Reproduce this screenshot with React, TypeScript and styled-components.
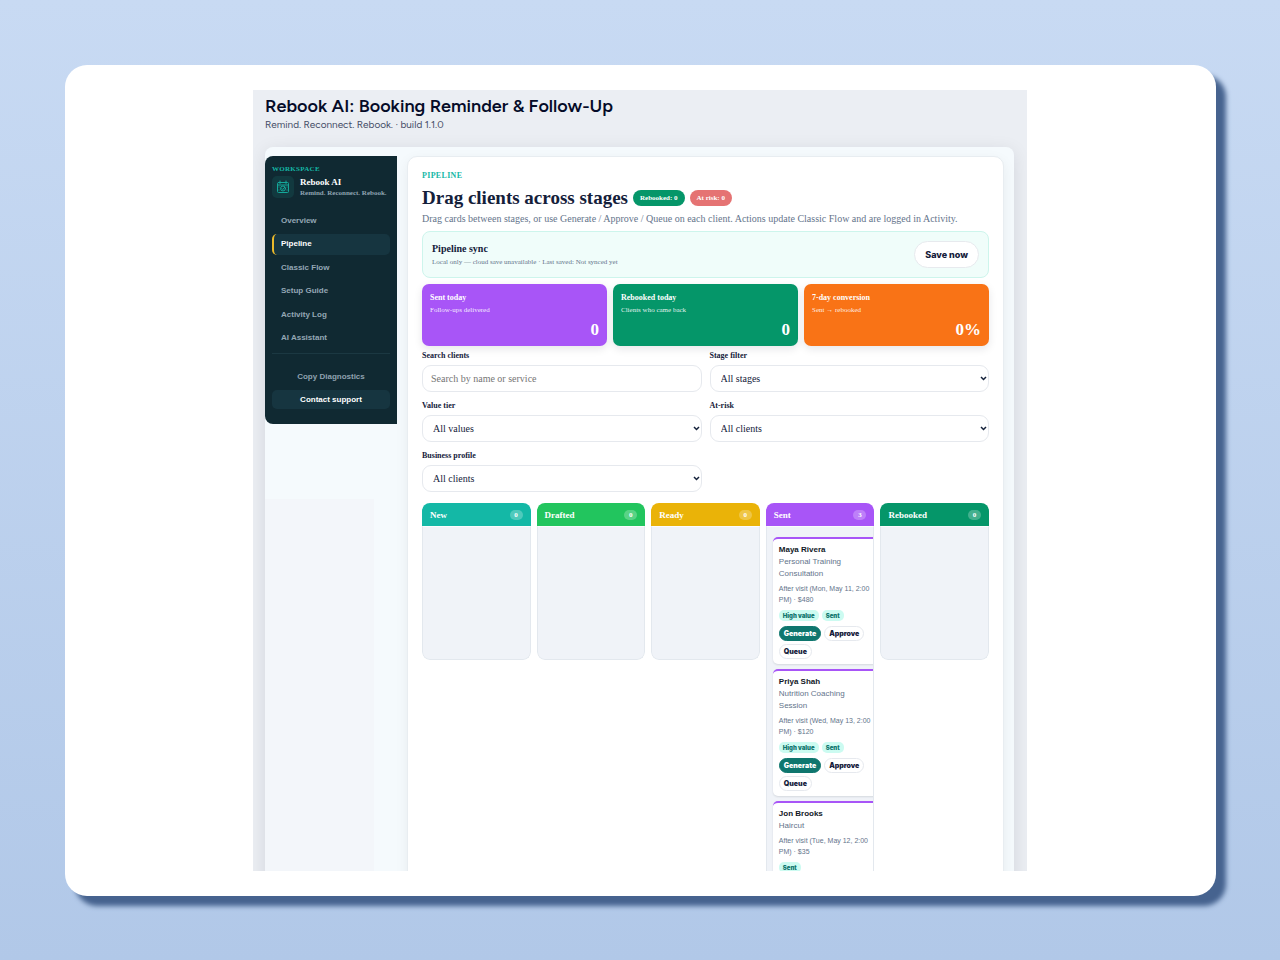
import React from 'react';
import styled, { createGlobalStyle } from 'styled-components';

const serif = '"Liberation Serif", "Times New Roman", serif';
const sans = '"Liberation Sans", Arial, sans-serif';
const heavy = 'Inter, "Arial Black", sans-serif';
const display = 'Figtree, Inter, "Open Sans", sans-serif';

const Global = createGlobalStyle`
  *, *::before, *::after { box-sizing: border-box; }
  body { margin: 0; font-family: ${serif}; color: #14213a; }
  h1, h2, h3, p, ul { margin: 0; padding: 0; }
  ul { list-style: none; }
  button { margin: 0; cursor: pointer; }
`;

const Backdrop = styled.div`
  display: flex;
  height: 100vh;
  padding: 65px 64px 64px 65px;
  background: linear-gradient(180deg, #c8daf3 0%, #b1c8e8 100%);
`;

const Frame = styled.div`
  flex: 1;
  min-width: 0;
  display: flex;
  justify-content: center;
  padding: 25px 25px 25px 24px;
  border-radius: 22px;
  background: #fff;
  box-shadow: 10px 10px 5px #46638f;
`;

const Screen = styled.div`
  width: 100%;
  max-width: 774px;
  display: flex;
  flex-direction: column;
  overflow: hidden;
  padding: 0 13px 0 12px;
  background: #ebeef3;
`;

const PageHeader = styled.header`
  flex: none;
  height: 57px;
  padding-top: 6px;
  font-family: ${display};
`;

const PageTitle = styled.h1`
  font-size: 18px;
  line-height: 21px;
  font-weight: 600;
  color: #050b28;
`;

const PageSubtitle = styled.p`
  font-size: 10px;
  line-height: 16px;
  color: #454d66;
`;

const Panel = styled.div`
  flex: 1 0 auto;
  display: flex;
  gap: 10px;
  padding: 9px 10px 0 0;
  border-radius: 8px 8px 0 0;
  background: #f5fafd;
  box-shadow: 0 4px 18px rgba(15, 23, 42, 0.1);
`;

const Rail = styled.div`
  flex: none;
  width: 132px;
  display: flex;
  flex-direction: column;
`;

const RailShade = styled.div`
  flex: 1;
  width: 109px;
  margin-top: 75px;
  background: #f3f6fa;
`;

const Sidebar = styled.aside`
  height: 268px;
  padding: 8px 7px;
  border-radius: 8px 0 0 8px;
  background: #102932;
`;

const Eyebrow = styled.p<{ $large?: boolean }>`
  font-size: ${(p) => (p.$large ? 8 : 7)}px;
  line-height: 10px;
  font-weight: 700;
  letter-spacing: 0.04em;
  text-transform: uppercase;
  color: #14b8a6;
`;

const Brand = styled.div`
  display: flex;
  align-items: center;
  gap: 6px;
  margin-top: 2px;
  height: 22px;
`;

const BrandMark = styled.div`
  flex: none;
  display: grid;
  place-items: center;
  width: 22px;
  height: 22px;
  border-radius: 5px;
  background: #12393f;
`;

const BrandName = styled.p`
  font-size: 9px;
  line-height: 12px;
  font-weight: 700;
  color: #fff;
`;

const BrandTag = styled.p`
  font-size: 7px;
  line-height: 11px;
  font-weight: 700;
  white-space: nowrap;
  color: #8fa3b1;
`;

const Nav = styled.nav`
  display: grid;
  grid-auto-rows: 1fr;
  gap: 2px;
  height: 139px;
  margin-top: 12px;
`;

const NavItem = styled.button<{ $active?: boolean }>`
  padding: 0 0 0 ${(p) => (p.$active ? 7 : 9)}px;
  border: 0;
  border-left: ${(p) => (p.$active ? '2px solid #eab92b' : '0')};
  border-radius: 5px;
  background: ${(p) => (p.$active ? '#163540' : 'transparent')};
  font: 700 8px/12px ${sans};
  text-align: left;
  color: ${(p) => (p.$active ? '#fff' : '#94a7b5')};
`;

const SidebarFoot = styled.div`
  display: grid;
  gap: 4px;
  margin-top: 4px;
  padding-top: 13px;
  border-top: 1px solid #1b3842;
`;

const FootButton = styled.button<{ $filled?: boolean }>`
  height: 19px;
  padding: 0;
  border: 0;
  border-radius: 5px;
  background: ${(p) => (p.$filled ? '#163540' : 'transparent')};
  font: 700 8px/12px ${sans};
  color: ${(p) => (p.$filled ? '#fff' : '#8fa2b0')};
`;

const Main = styled.main`
  flex: 1;
  min-width: 0;
  padding: 14px 14px;
  border: 1px solid #e8edf1;
  border-radius: 10px 10px 0 0;
  background: #fff;
  box-shadow: 0 4px 14px rgba(15, 23, 42, 0.06);
`;

const TitleRow = styled.div`
  display: flex;
  align-items: center;
  gap: 5px;
  height: 24px;
  margin-top: 5px;
`;

const Heading = styled.h2`
  font-size: 19px;
  line-height: 24px;
  font-weight: 700;
  white-space: nowrap;
  color: #14203a;
`;

const Pill = styled.span<{ $color: string }>`
  padding: 0 7px;
  border-radius: 8px;
  background: ${(p) => p.$color};
  font-size: 7px;
  line-height: 16px;
  font-weight: 700;
  white-space: nowrap;
  color: #fff;
`;

const Lead = styled.p`
  margin-top: 2px;
  font-size: 10px;
  line-height: 14px;
  color: #64748b;
`;

const SyncBox = styled.section`
  display: flex;
  align-items: center;
  justify-content: space-between;
  height: 47px;
  margin-top: 5px;
  padding: 0 9px;
  border: 1px solid #cdf5ec;
  border-radius: 8px;
  background: #f0fdfa;
`;

const SyncTitle = styled.h3`
  font-size: 10px;
  line-height: 14px;
  font-weight: 700;
`;

const SyncText = styled.p`
  font-size: 7px;
  line-height: 12px;
  color: #64748b;
`;

const SaveButton = styled.button`
  height: 27px;
  padding: 0 10px;
  border: 1px solid #e7eaee;
  border-radius: 14px;
  background: #fff;
  font: 800 9px/12px ${heavy};
  color: #14203a;
`;

const Stats = styled.section`
  display: grid;
  grid-template-columns: repeat(3, 1fr);
  gap: 6px;
  margin-top: 6px;
`;

const Stat = styled.article<{ $color: string }>`
  height: 62px;
  padding: 8px 8px;
  border-radius: 7px;
  background: ${(p) => p.$color};
  box-shadow: 0 3px 8px rgba(15, 23, 42, 0.1);
  color: #fff;
`;

const StatName = styled.h3`
  font-size: 8px;
  line-height: 12px;
  font-weight: 700;
`;

const StatNote = styled.p`
  font-size: 7px;
  line-height: 12px;
  color: rgba(255, 255, 255, 0.9);
`;

const StatValue = styled.p`
  margin-top: 4px;
  font-size: 17px;
  line-height: 20px;
  font-weight: 700;
  text-align: right;
`;

const Filters = styled.form`
  display: grid;
  grid-template-columns: 1fr 1fr;
  gap: 8px;
  margin-top: 4px;
`;

const Field = styled.label`
  display: grid;
  gap: 3px;
  font-size: 8px;
  line-height: 12px;
  font-weight: 700;
`;

const SearchInput = styled.input`
  width: 100%;
  height: 27px;
  padding: 0 8px;
  border: 1px solid #e6e9ee;
  border-radius: 9px;
  background: #fff;
  font: 400 10px/14px ${serif};
  color: #14213a;
  &::placeholder { color: #757575; }
`;

const SelectBox = styled.span`
  position: relative;
  display: block;
`;

const Chevron = styled.svg`
  position: absolute;
  right: 2px;
  top: 10px;
  pointer-events: none;
`;

const Select = styled.select`
  appearance: none;
  display: block;
  width: 100%;
  height: 27px;
  padding: 0 10px;
  border: 1px solid #e6e9ee;
  border-radius: 9px;
  background: #fff;
  font: 400 10px/14px ${serif};
  color: #14213a;
`;

const Board = styled.section`
  display: grid;
  grid-template-columns: repeat(5, minmax(0, 1fr));
  align-items: start;
  gap: 6px;
  margin-top: 11px;
`;

const Column = styled.section`
  display: flex;
  flex-direction: column;
  overflow: hidden;
  min-height: 157px;
  border-radius: 8px;
`;

const ColumnHead = styled.header<{ $color: string }>`
  display: flex;
  align-items: center;
  justify-content: space-between;
  height: 23px;
  padding: 0 8px;
  background: ${(p) => p.$color};
  color: #fff;
`;

const ColumnBody = styled.div`
  flex: 1;
  border: 1px solid #e3e8ee;
  border-top-color: #fbfcfd;
  border-radius: 0 0 8px 8px;
  background: #f0f3f8;
  overflow: hidden;
`;

const ColumnName = styled.h3`
  font-size: 9px;
  line-height: 12px;
  font-weight: 700;
`;

const Count = styled.span`
  width: 13px;
  border-radius: 5px;
  background: rgba(255, 255, 255, 0.25);
  font-size: 7px;
  line-height: 10px;
  font-weight: 700;
  text-align: center;
`;

const CardList = styled.ul`
  display: grid;
  gap: 5px;
  width: 112px;
  && { padding: 10px 0 6px 6px; }
`;

const Card = styled.li`
  padding: 5px 6px;
  border-top: 2px solid #a855f7;
  border-radius: 5px;
  background: #fff;
  box-shadow: 0 1px 2px rgba(15, 23, 42, 0.12);
  font-family: ${sans};
`;

const CardName = styled.h4`
  margin: 0;
  font-size: 8px;
  line-height: 12px;
  font-weight: 700;
  color: #111827;
`;

const CardService = styled.p`
  width: 76px;
  font-size: 8px;
  line-height: 12px;
  color: #64748b;
`;

const CardMeta = styled.p`
  && { margin-top: 3px; }
  font-size: 7px;
  line-height: 11px;
  color: #64748b;
`;

const Tags = styled.div`
  display: flex;
  gap: 3px;
  margin-top: 5px;
`;

const Tag = styled.span`
  padding: 0 4px;
  border-radius: 5px;
  background: #ccfbf1;
  font: 900 6px/11px ${heavy};
  white-space: nowrap;
  color: #0f766e;
`;

const Actions = styled.div`
  display: flex;
  flex-wrap: wrap;
  gap: 3px;
  margin-top: 5px;
`;

const ActionButton = styled.button<{ $primary?: boolean }>`
  height: 15px;
  padding: 0 4px;
  border: 1px solid ${(p) => (p.$primary ? '#0f766e' : '#e6e9ee')};
  border-radius: 8px;
  background: ${(p) => (p.$primary ? '#0f766e' : '#fff')};
  font: 900 7px/11px ${heavy};
  color: ${(p) => (p.$primary ? '#fff' : '#14203a')};
`;

const navItems = ['Overview', 'Pipeline', 'Classic Flow', 'Setup Guide', 'Activity Log', 'AI Assistant'];

const stats = [
  { name: 'Sent today', note: 'Follow-ups delivered', value: '0', color: '#a855f7' },
  { name: 'Rebooked today', note: 'Clients who came back', value: '0', color: '#059669' },
  { name: '7-day conversion', note: 'Sent → rebooked', value: '0%', color: '#f97316' },
];

const filters = [
  { label: 'Stage filter', value: 'All stages' },
  { label: 'Value tier', value: 'All values' },
  { label: 'At-risk', value: 'All clients' },
  { label: 'Business profile', value: 'All clients' },
];

const clients = [
  { name: 'Maya Rivera', service: 'Personal Training Consultation', meta: ['After visit (Mon, May 11, 2:00', 'PM) · $480'], tags: ['High value', 'Sent'], actions: ['Generate', 'Approve', 'Queue'] },
  { name: 'Priya Shah', service: 'Nutrition Coaching Session', meta: ['After visit (Wed, May 13, 2:00', 'PM) · $120'], tags: ['High value', 'Sent'], actions: ['Generate', 'Approve', 'Queue'] },
  { name: 'Jon Brooks', service: 'Haircut', meta: ['After visit (Tue, May 12, 2:00', 'PM) · $35'], tags: ['Sent'], actions: [] as string[] },
];

const columns = [
  { name: 'New', color: '#14b8a6', cards: [] as typeof clients },
  { name: 'Drafted', color: '#22c55e', cards: [] as typeof clients },
  { name: 'Ready', color: '#eab308', cards: [] as typeof clients },
  { name: 'Sent', color: '#a855f7', cards: clients },
  { name: 'Rebooked', color: '#059669', cards: [] as typeof clients },
];

function CalendarMark() {
  return (
    <svg width="14" height="14" viewBox="0 0 28 28" fill="none" stroke="#14a89a" strokeWidth="2" strokeLinecap="round" strokeLinejoin="round" aria-hidden="true">
      <path d="M5 5h18a2 2 0 0 1 2 2v16a2 2 0 0 1-2 2H5a2 2 0 0 1-2-2V7a2 2 0 0 1 2-2zM3 10h22M8 2v5M20 2v5" />
      <circle cx="14" cy="17" r="5" />
      <path d="M11.500 17l2 2 4-4.500M6 14v.1M6 20v.1M22 14v.1M22 20v.1" />
    </svg>
  );
}

function ClientCard({ client }: { client: (typeof clients)[number] }) {
  return (
    <Card>
      <CardName>{client.name}</CardName>
      <CardService>{client.service}</CardService>
      <CardMeta>
        {client.meta[0]}
        <br />
        {client.meta[1]}
      </CardMeta>
      <Tags>
        {client.tags.map((t) => (
          <Tag key={t}>{t}</Tag>
        ))}
      </Tags>
      {client.actions.length > 0 && (
        <Actions>
          {client.actions.map((a, i) => (
            <ActionButton key={a} type="button" $primary={i === 0}>{a}</ActionButton>
          ))}
        </Actions>
      )}
    </Card>
  );
}

export default function App() {
  return (
    <>
      <Global />
      <Backdrop>
        <Frame>
          <Screen>
            <PageHeader>
              <PageTitle>Rebook AI: Booking Reminder &amp; Follow-Up</PageTitle>
              <PageSubtitle>Remind. Reconnect. Rebook. · build 1.1.0</PageSubtitle>
            </PageHeader>
            <Panel>
              <Rail>
                <Sidebar>
                  <Eyebrow>Workspace</Eyebrow>
                  <Brand>
                    <BrandMark>
                      <CalendarMark />
                    </BrandMark>
                    <div>
                      <BrandName>Rebook AI</BrandName>
                      <BrandTag>Remind. Reconnect. Rebook.</BrandTag>
                    </div>
                  </Brand>
                  <Nav>
                    {navItems.map((n) => (
                      <NavItem key={n} type="button" $active={n === 'Pipeline'}>{n}</NavItem>
                    ))}
                  </Nav>
                  <SidebarFoot>
                    <FootButton type="button">Copy Diagnostics</FootButton>
                    <FootButton type="button" $filled>Contact support</FootButton>
                  </SidebarFoot>
                </Sidebar>
                <RailShade />
              </Rail>
              <Main>
                <Eyebrow $large>Pipeline</Eyebrow>
                <TitleRow>
                  <Heading>Drag clients across stages</Heading>
                  <Pill $color="#059669">Rebooked: 0</Pill>
                  <Pill $color="#e57373">At risk: 0</Pill>
                </TitleRow>
                <Lead>
                  Drag cards between stages, or use Generate / Approve / Queue on each client. Actions update Classic Flow and are logged in Activity.
                </Lead>
                <SyncBox>
                  <div>
                    <SyncTitle>Pipeline sync</SyncTitle>
                    <SyncText>Local only — cloud save unavailable · Last saved: Not synced yet</SyncText>
                  </div>
                  <SaveButton type="button">Save now</SaveButton>
                </SyncBox>
                <Stats>
                  {stats.map((s) => (
                    <Stat key={s.name} $color={s.color}>
                      <StatName>{s.name}</StatName>
                      <StatNote>{s.note}</StatNote>
                      <StatValue>{s.value}</StatValue>
                    </Stat>
                  ))}
                </Stats>
                <Filters>
                  <Field>
                    Search clients
                    <SearchInput type="text" placeholder="Search by name or service" />
                  </Field>
                  {filters.map((f) => (
                    <Field key={f.label}>
                      {f.label}
                      <SelectBox>
                        <Select>
                          <option>{f.value}</option>
                        </Select>
                        <Chevron width="7" height="7" viewBox="0 0 7 7" fill="none" stroke="#14213a" strokeWidth="1.500" aria-hidden="true">
                          <path d="M1 2l2.500 2.500L6 2" />
                        </Chevron>
                      </SelectBox>
                    </Field>
                  ))}
                </Filters>
                <Board>
                  {columns.map((c) => (
                    <Column key={c.name}>
                      <ColumnHead $color={c.color}>
                        <ColumnName>{c.name}</ColumnName>
                        <Count>{c.cards.length}</Count>
                      </ColumnHead>
                      <ColumnBody>
                        {c.cards.length > 0 && (
                          <CardList>
                            {c.cards.map((client) => (
                              <ClientCard key={client.name} client={client} />
                            ))}
                          </CardList>
                        )}
                      </ColumnBody>
                    </Column>
                  ))}
                </Board>
              </Main>
            </Panel>
          </Screen>
        </Frame>
      </Backdrop>
    </>
  );
}
